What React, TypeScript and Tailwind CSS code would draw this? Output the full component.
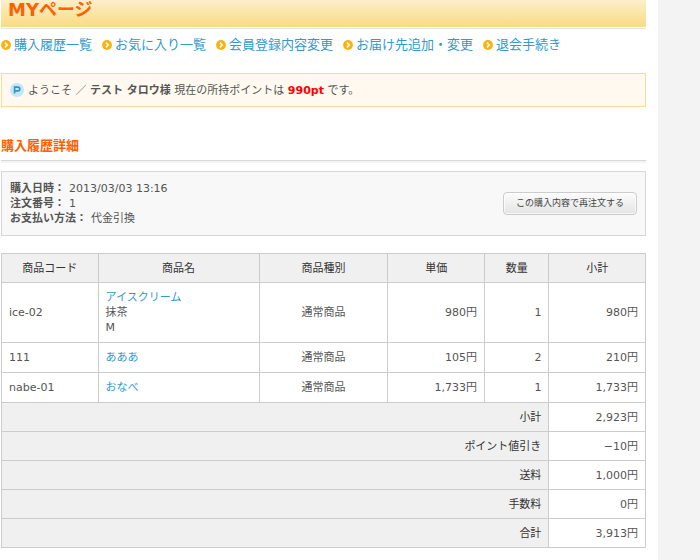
import React from "react";

const navLinks = [
  "購入履歴一覧",
  "お気に入り一覧",
  "会員登録内容変更",
  "お届け先追加・変更",
  "退会手続き",
];

const headings = [
  { label: "商品コード", width: "w-[15%]" },
  { label: "商品名", width: "w-[25%]" },
  { label: "商品種別", width: "w-[20%]" },
  { label: "単価", width: "w-[15%]" },
  { label: "数量", width: "w-[10%]" },
  { label: "小計", width: "w-[15%]" },
];

const items = [
  { code: "ice-02", name: "アイスクリーム", options: ["抹茶", "M"], kind: "通常商品", price: "980円", qty: "1", total: "980円" },
  { code: "111", name: "あああ", options: [], kind: "通常商品", price: "105円", qty: "2", total: "210円" },
  { code: "nabe-01", name: "おなべ", options: [], kind: "通常商品", price: "1,733円", qty: "1", total: "1,733円" },
];

const totals = [
  { label: "小計", value: "2,923円" },
  { label: "ポイント値引き", value: "−10円" },
  { label: "送料", value: "1,000円" },
  { label: "手数料", value: "0円" },
  { label: "合計", value: "3,913円" },
];

const details = [
  { label: "購入日時", value: "2013/03/03 13:16" },
  { label: "注文番号", value: "1" },
  { label: "お支払い方法", value: "代金引換" },
];

function ArrowIcon() {
  return (
    <svg className="h-[10px] w-[10px] shrink-0" viewBox="0 0 10 10" aria-hidden="true">
      <circle cx="5" cy="5" r="4.9" fill="#fbb20c" />
      <path d="M3.9 2.6 6.3 5 3.9 7.4" fill="none" stroke="#fff" strokeWidth="1.5" />
    </svg>
  );
}

function PointIcon() {
  return (
    <svg className="h-[14px] w-[14px] shrink-0" viewBox="0 0 14 14" aria-hidden="true">
      <circle cx="7" cy="7" r="7" fill="#c3e7f8" />
      <path d="M4.6 10.6V4.1h3.3a1.9 1.9 0 0 1 0 3.8H4.6" fill="none" stroke="#3193c6" strokeWidth="1.6" />
    </svg>
  );
}

export default function App() {
  return (
    <div className="flex min-h-screen bg-[#f3f3f3] font-['DejaVu_Sans','Noto_Sans_CJK_JP',sans-serif] text-[11px] leading-[15px] text-[#555]">
      <main className="min-w-0 flex-1 bg-white pr-3 pb-3 pl-px">
        <h1 className="h-[27px] bg-linear-to-b from-[#fcefca] to-[#f9db80] pl-[7px] text-[18px] leading-5 font-bold text-[#ff6000]">
          MYページ
        </h1>
        <div className="mt-px h-px bg-[#dbe6ee]" />

        <nav className="mt-[6px] flex flex-wrap gap-x-[10px] text-[13px] leading-5">
          {navLinks.map((label) => (
            <a key={label} href="#" className="flex items-center gap-[3px] text-[#3399cc]">
              <ArrowIcon />
              {label}
            </a>
          ))}
        </nav>

        <div className="mt-[18px] flex h-[34px] items-center gap-1 border border-[#fadb95] bg-[#fff9ef] px-2">
          <PointIcon />
          <p>
            ようこそ ／ <b>テスト タロウ様</b> 現在の所持ポイントは <b className="text-[#ff0000]">990pt</b> です。
          </p>
        </div>

        <h2 className="mt-[29px] text-[13px] leading-5 font-bold text-[#ff6000]">購入履歴詳細</h2>
        <div className="mt-1 h-[3px] border-t border-[#d8d8d8] bg-[#f3f3f3]" />

        <section className="mt-2 flex items-center justify-between border border-[#d6d6d6] bg-[#f8f8f8] px-2 py-[9px]">
          <dl>
            {details.map((d) => (
              <div key={d.label} className="flex gap-1">
                <dt className="font-bold">{d.label}：</dt>
                <dd>{d.value}</dd>
              </div>
            ))}
          </dl>
          <button
            type="button"
            className="h-[23px] rounded-[4px] border border-[#ccc] bg-linear-to-b from-[#fcfcfc] to-[#e4e4e4] px-3 text-[9px] text-[#444] inset-ring inset-ring-white/70"
          >
            この購入内容で再注文する
          </button>
        </section>

        <table className="mt-[17px] w-full table-fixed border-collapse [&_td]:border [&_td]:border-[#ccc] [&_th]:border [&_th]:border-[#ccc]">
          <thead>
            <tr className="h-[29px] bg-[#f0f0f0] text-[#333]">
              {headings.map((h) => (
                <th key={h.label} scope="col" className={`${h.width} font-normal`}>
                  {h.label}
                </th>
              ))}
            </tr>
          </thead>
          <tbody>
            {items.map((item) => (
              <tr key={item.code}>
                <td className="px-[7px] py-[7px]">{item.code}</td>
                <td className="px-[7px] py-[7px]">
                  <a href="#" className="text-[#3399cc]">
                    {item.name}
                  </a>
                  {item.options.map((o) => (
                    <div key={o}>{o}</div>
                  ))}
                </td>
                <td className="px-[7px] py-[7px] text-center">{item.kind}</td>
                <td className="px-[7px] py-[7px] text-right">{item.price}</td>
                <td className="px-[7px] py-[7px] text-right">{item.qty}</td>
                <td className="px-[7px] py-[7px] text-right">{item.total}</td>
              </tr>
            ))}
          </tbody>
          <tfoot>
            {totals.map((t) => (
              <tr key={t.label} className="h-[29px]">
                <th scope="row" colSpan={5} className="bg-[#f0f0f0] px-[7px] text-right font-normal text-[#333]">
                  {t.label}
                </th>
                <td className="px-[7px] text-right">{t.value}</td>
              </tr>
            ))}
          </tfoot>
        </table>
      </main>
      <div className="w-[42px] shrink-0" />
    </div>
  );
}
